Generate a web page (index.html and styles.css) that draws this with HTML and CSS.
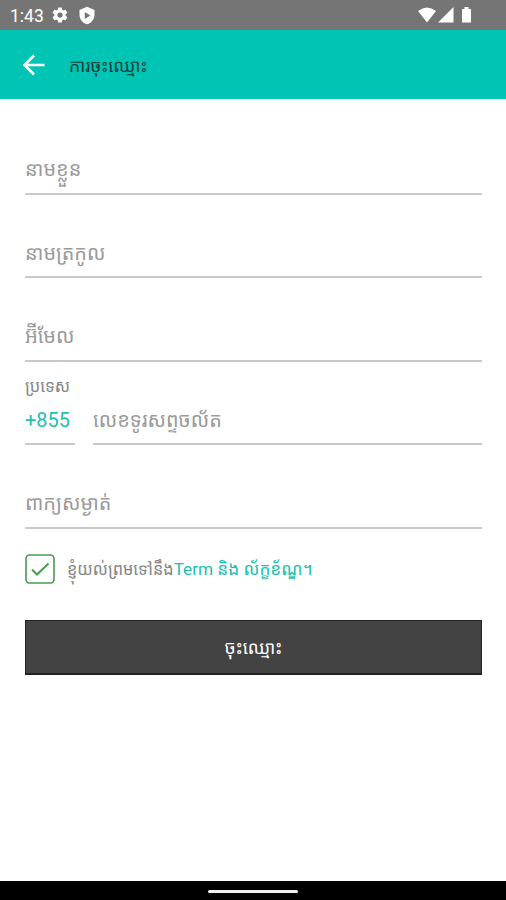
FILE: index.html
```html
<!DOCTYPE html>
<html lang="km">
<head>
<meta charset="utf-8">
<title>ការចុះឈ្មោះ</title>
<link rel="stylesheet" href="styles.css">
</head>
<body>
<div class="status">
  <span class="time">1:43</span>
  <svg class="gear" width="18" height="18" viewBox="0 0 24 24"><path fill="#fff" fill-rule="evenodd" d="M19.400 13a7.500 7.500 0 0 0 0-2l2.100-1.600a.5.500 0 0 0 .1-.6l-2-3.500a.5.500 0 0 0-.6-.2l-2.500 1a7.300 7.300 0 0 0-1.700-1L14.400 2.400a.5.500 0 0 0-.5-.4h-4a.5.500 0 0 0-.5.4L9 5.100a7.700 7.700 0 0 0-1.700 1l-2.500-1a.5.500 0 0 0-.6.2l-2 3.500a.5.500 0 0 0 .1.600L4.500 11a7.500 7.500 0 0 0 0 2l-2.200 1.600a.5.500 0 0 0-.1.600l2 3.500c.1.200.4.300.6.200l2.500-1c.5.400 1.100.7 1.700 1l.4 2.700c0 .2.200.4.500.4h4c.2 0 .5-.2.500-.4l.4-2.700c.6-.3 1.200-.6 1.700-1l2.500 1c.2.100.5 0 .6-.2l2-3.500a.5.500 0 0 0-.1-.6zM12 15.500a3.500 3.500 0 1 1 0-7 3.500 3.500 0 0 1 0 7z"/></svg>
  <svg class="shield" width="18" height="19" viewBox="0 0 24 24" preserveAspectRatio="none"><path fill="#fff" fill-rule="evenodd" d="M12 1 2 5v6c0 5.500 4.200 10.700 10 12 5.800-1.300 10-6.500 10-12V5zM9 7.500l7.500 4.500L9 16.500z"/></svg>
  <svg class="signals" width="55" height="18" viewBox="0 0 55 18"><path fill="#fff" d="M0 5Q9-2 18 5L9 16.500zM20 16.500 35.500 1v15.500zM44 3h2.500V1h4v2H53v13.500h-9z"/></svg>
</div>
<header class="bar">
  <svg width="22" height="22" viewBox="0 0 22 22"><path d="M21.500 11H2M11 1.500 1.500 11l9.500 9.500" fill="none" stroke="#fff" stroke-width="2.600"/></svg>
  <h1>ការចុះឈ្មោះ</h1>
</header>
<main>
  <div class="field">នាមខ្លួន</div>
  <div class="field">នាមត្រកូល</div>
  <div class="field">អ៊&#x200C;ីមែល</div>
  <div class="label">ប្រទេស</div>
  <div class="phone"><div class="code">+855</div><div class="number">លេខទូរសព្ទចល័ត</div></div>
  <div class="field">ពាក្យសម្ងាត់</div>
  <div class="agree">
    <svg width="30" height="30" viewBox="0 0 30 30"><rect x="1" y="1" width="28" height="28" rx="3.500" fill="none" stroke="#4c9a50" stroke-width="1.600"/><path d="m7 15.500 5 5L23.500 9.500" fill="none" stroke="#4c9a50" stroke-width="2"/></svg>
    <span class="terms">ខ្ញុំយល់ព្រមទៅនឹង</span><a>Term និង ល័ក្ខខ័ណ្ឌ។</a>
  </div>
  <button>ចុះឈ្មោះ</button>
</main>
<footer><i></i></footer>
</body>
</html>
```
FILE: styles.css
```css
*{box-sizing:border-box}
body{margin:0;height:900px;display:flex;flex-direction:column;background:#fff;font-family:Roboto,"Noto Sans Khmer","Noto Sans",sans-serif;overflow:hidden}
.status{height:30px;background:#757575;color:#fff;display:flex;align-items:center;padding:0 33px 0 10px}
.time{font-size:17.500px;width:41px;padding-top:1px}
.shield{margin-left:9px}
.signals{margin-left:auto}
.bar{height:69px;background:#00c4b4;display:flex;align-items:center;padding-left:23px}
h1{font-size:17.700px;font-weight:400;color:#163f3b;margin:0 0 0 24px;white-space:nowrap}
main{flex:1;padding:45px 24px 0 25px}
.field,.code,.number{height:50.500px;line-height:51px;border-bottom:2px solid #c9c9c9;font-size:19.900px;color:#9a9a9a;white-space:nowrap}
.field{margin-bottom:33px}
.field:nth-child(3){margin-bottom:15px}
.label{height:18px;line-height:20px;font-size:16.500px;color:#858585}
.phone{display:flex;gap:18px;margin-bottom:33px}
.code{width:50px;color:#20bfb0;font-size:19.900px}
.number{flex:1}
.agree{display:flex;align-items:center;height:30px;margin-top:-8px;font-size:16.300px;color:#858585;white-space:nowrap}
.terms{margin-left:12px}
.agree a{color:#20bfb0;font-size:17.200px}
button{display:block;width:100%;height:55px;margin-top:36px;border:1px solid #222;border-bottom-width:2px;background:#434343;color:#fff;font:400 17.900px Roboto,"Noto Sans Khmer",sans-serif}
footer{height:19px;background:#000;display:flex;align-items:center;justify-content:center}
footer i{width:90px;height:3px;margin-top:2px;border-radius:2px;background:#f1edf0}
```
